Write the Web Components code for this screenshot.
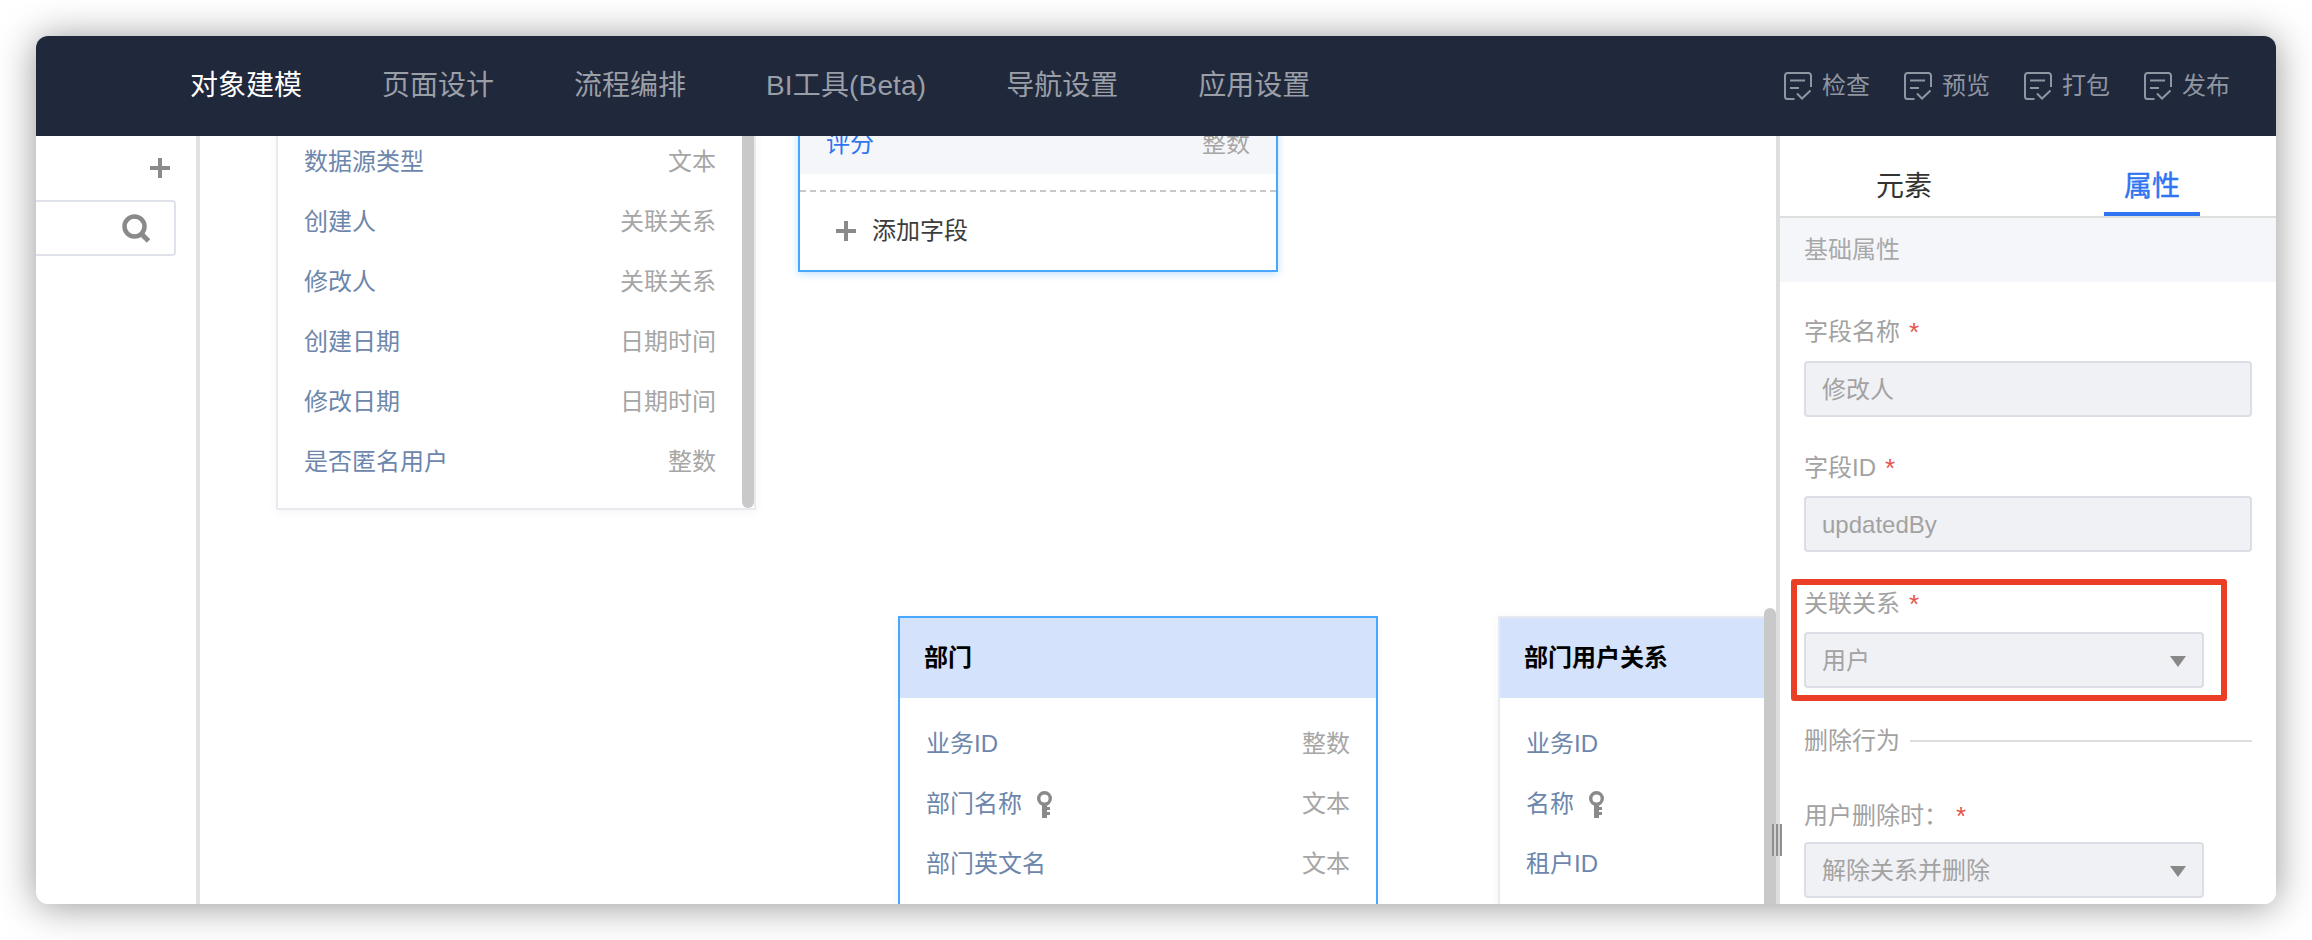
<!DOCTYPE html>
<html lang="zh-CN">
<head>
<meta charset="utf-8">
<title>对象建模</title>
<style>
  html, body { margin: 0; height: 100%; background: #fff; overflow: hidden; }
  body {
    box-sizing: border-box;
    padding: 36px;
    font: 24px/34px "Liberation Sans", "Noto Sans CJK SC", sans-serif;
  }
</style>
</head>
<body>
<app-window>
  <top-nav slot="nav">
    <nav-item active>对象建模</nav-item>
    <nav-item>页面设计</nav-item>
    <nav-item>流程编排</nav-item>
    <nav-item style="letter-spacing:.15px">BI工具(Beta)</nav-item>
    <nav-item>导航设置</nav-item>
    <nav-item>应用设置</nav-item>
    <tool-button slot="tools">检查</tool-button>
    <tool-button slot="tools">预览</tool-button>
    <tool-button slot="tools">打包</tool-button>
    <tool-button slot="tools">发布</tool-button>
  </top-nav>

  <side-list slot="side"></side-list>

  <er-canvas slot="canvas">
    <entity-card x="76" y="-6" scroll>
      <field-row>数据源类型<span slot="type">文本</span></field-row>
      <field-row>创建人<span slot="type">关联关系</span></field-row>
      <field-row>修改人<span slot="type">关联关系</span></field-row>
      <field-row>创建日期<span slot="type">日期时间</span></field-row>
      <field-row>修改日期<span slot="type">日期时间</span></field-row>
      <field-row>是否匿名用户<span slot="type">整数</span></field-row>
    </entity-card>

    <entity-card x="598" y="-24" selected addable>
      <field-row active>评分<span slot="type">整数</span></field-row>
    </entity-card>

    <entity-card x="698" y="480" title="部门" selected>
      <field-row>业务ID<span slot="type">整数</span></field-row>
      <field-row key>部门名称<span slot="type">文本</span></field-row>
      <field-row>部门英文名<span slot="type">文本</span></field-row>
    </entity-card>

    <entity-card x="1298" y="480" title="部门用户关系">
      <field-row>业务ID</field-row>
      <field-row key>名称</field-row>
      <field-row>租户ID</field-row>
    </entity-card>
  </er-canvas>

  <prop-panel slot="panel">
    <form-field label="字段名称" value="修改人"></form-field>
    <form-field label="字段ID" value="updatedBy" nudge></form-field>
    <form-field label="关联关系" value="用户" select nudge style="margin-top:35px"></form-field>
    <line-title>删除行为</line-title>
    <form-field label="用户删除时：" value="解除关系并删除" select tight></form-field>
  </prop-panel>
</app-window>

<script>
const PLUS_ICON = `<svg width="20" height="20" viewBox="0 0 20 20"><path d="M8 0h4v8h8v4h-8v8H8v-8H0V8h8z" fill="#8a8a8a"/></svg>`;

class AppWindow extends HTMLElement {
  constructor() {
    super();
    this.attachShadow({ mode: 'open' }).innerHTML = `
      <style>
        :host {
          display: flex;
          flex-direction: column;
          height: 868px;
          border-radius: 12px;
          overflow: hidden;
          background: #fff;
          box-shadow: 0 2px 38px rgba(0, 0, 0, .42);
        }
        .body { flex: 1; min-height: 0; display: flex; }
      </style>
      <slot name="nav"></slot>
      <div class="body">
        <slot name="side"></slot>
        <slot name="canvas"></slot>
        <slot name="panel"></slot>
      </div>
    `;
  }
}

class TopNav extends HTMLElement {
  constructor() {
    super();
    this.attachShadow({ mode: 'open' }).innerHTML = `
      <style>
        :host {
          display: flex;
          align-items: center;
          height: 100px;
          padding: 0 46px 0 154px;
          background: #20283b;
          flex: none;
          position: relative;
          z-index: 2;
        }
        .items { display: flex; gap: 80px; flex: 1; }
        .tools { display: flex; gap: 34px; }
      </style>
      <div class="items"><slot></slot></div>
      <div class="tools"><slot name="tools"></slot></div>
    `;
  }
}

class NavItem extends HTMLElement {
  constructor() {
    super();
    this.attachShadow({ mode: 'open' }).innerHTML = `
      <style>
        :host { display: block; font-size: 28px; line-height: 40px; color: #9a9ea7; }
        :host([active]) { color: #fff; }
      </style>
      <slot></slot>
    `;
  }
}

class ToolButton extends HTMLElement {
  constructor() {
    super();
    this.attachShadow({ mode: 'open' }).innerHTML = `
      <style>
        :host { display: flex; align-items: center; gap: 10px; color: #8f95a1; font-size: 24px; line-height: 34px; }
        svg { display: block; }
      </style>
      <svg width="28" height="28" viewBox="0 0 28 28" fill="none" stroke="#8f95a1" stroke-width="2">
        <path d="M10.5 27H3.5A2.5 2.5 0 0 1 1 24.500V3.500A2.500 2.500 0 0 1 3.500 1H24.500A2.500 2.500 0 0 1 27 3.500V15"/>
        <path d="M6 8.500H21M6 16H15M13 21.500L18 26.500L26.500 18.500"/>
      </svg>
      <span><slot></slot></span>
    `;
  }
}

class SideList extends HTMLElement {
  constructor() {
    super();
    this.attachShadow({ mode: 'open' }).innerHTML = `
      <style>
        :host {
          display: block;
          box-sizing: content-box;
          width: 160px;
          flex: none;
          overflow: hidden;
          border-right: 4px solid #e2e2e2;
          position: relative;
          box-shadow: 2px 0 4px rgba(0, 0, 0, .06);
        }
        .add { display: flex; justify-content: flex-end; padding: 22px 26px 0 0; }
        svg { display: block; }
        .search {
          box-sizing: border-box;
          height: 56px;
          margin: 22px 20px 0 -20px;
          padding-right: 23px;
          border: 2px solid #dfe2ea;
          border-radius: 4px;
          display: flex;
          align-items: center;
          justify-content: flex-end;
        }
      </style>
      <div class="add">${PLUS_ICON}</div>
      <div class="search">
        <svg width="29" height="29" viewBox="0 0 29 29" fill="none" stroke="#8a8a8a">
          <circle cx="12.500" cy="12.500" r="10" stroke-width="4.500"/>
          <path d="M19 19.500L26.500 27" stroke-width="5"/>
        </svg>
      </div>
    `;
  }
}

class ErCanvas extends HTMLElement {
  constructor() {
    super();
    this.attachShadow({ mode: 'open' }).innerHTML = `
      <style>
        :host { display: block; flex: 1; min-width: 0; position: relative; overflow: hidden; background: #fff; }
        .scrollbar {
          position: absolute;
          right: 0;
          top: 472px;
          bottom: 0;
          width: 12px;
          border-radius: 6px 6px 0 0;
          background: #c9c9c9;
        }
      </style>
      <slot></slot>
      <div class="scrollbar"></div>
    `;
  }
}

class EntityCard extends HTMLElement {
  constructor() {
    super();
    this.attachShadow({ mode: 'open' }).innerHTML = `
      <style>
        :host {
          display: block;
          position: absolute;
          box-sizing: border-box;
          width: 480px;
          background: #fff;
          border: 2px solid #e8eaf0;
          box-shadow: 0 2px 10px rgba(40, 60, 100, .05);
        }
        :host([selected]) { border-color: #48a8ff; }
        :host([selected][addable]) { box-shadow: 0 2px 8px rgba(72, 168, 255, .35); }
        :host([scroll]) { padding-right: 12px; padding-bottom: 16px; }
        :host([title]) { min-height: 520px; }
        .head {
          display: none;
          height: 80px;
          padding: 0 24px;
          align-items: center;
          background: #d4e2fb;
          color: #000;
          font-weight: 700;
        }
        :host([title]) .head { display: flex; }
        :host([title]) .rows { padding-top: 16px; }
        .bar {
          display: none;
          position: absolute;
          top: 0;
          right: 0;
          bottom: 0;
          width: 12px;
          border-radius: 0 0 6px 6px;
          background: #c9c9c9;
        }
        :host([scroll]) .bar { display: block; }
        .add {
          display: none;
          align-items: center;
          gap: 16px;
          height: 78px;
          padding-left: 36px;
          margin-top: 16px;
          border-top: 2px dashed #c8c8c8;
          color: #3c3c3c;
        }
        :host([addable]) .add { display: flex; }
        svg { display: block; }
      </style>
      <div class="head"></div>
      <div class="rows"><slot></slot></div>
      <div class="add">${PLUS_ICON}<span>添加字段</span></div>
      <div class="bar"></div>
    `;
  }

  connectedCallback() {
    this.style.left = this.getAttribute('x') + 'px';
    this.style.top = this.getAttribute('y') + 'px';
    this.shadowRoot.querySelector('.head').textContent = this.getAttribute('title') || '';
  }
}

class FieldRow extends HTMLElement {
  constructor() {
    super();
    this.attachShadow({ mode: 'open' }).innerHTML = `
      <style>
        :host {
          display: flex;
          align-items: center;
          height: 60px;
          padding: 0 26px;
          color: #6d86ab;
        }
        :host([active]) { background: #f5f6fa; color: #2f74f0; }
        .key { display: none; margin-left: 14px; }
        :host([key]) .key { display: block; }
        .type { margin-left: auto; color: #a6a6a6; }
      </style>
      <span><slot></slot></span>
      <svg class="key" width="17" height="27" viewBox="0 0 17 27" fill="none">
        <circle cx="8.500" cy="7.500" r="5.800" stroke="#8a8a8a" stroke-width="3.400"/>
        <path d="M6 13h5v3h3v3h-3v2h3v3h-3v3H6z" fill="#8a8a8a"/>
      </svg>
      <span class="type"><slot name="type"></slot></span>
    `;
  }
}

class PropPanel extends HTMLElement {
  constructor() {
    super();
    this.attachShadow({ mode: 'open' }).innerHTML = `
      <style>
        :host {
          display: block;
          flex: none;
          width: 496px;
          border-left: 4px solid #dedede;
          position: relative;
          overflow: visible;
          background: #fff;
        }
        .tabs {
          display: flex;
          height: 80px;
          border-bottom: 2px solid #dedede;
        }
        .tab {
          flex: 1;
          display: flex;
          justify-content: center;
          color: #333;
          font-size: 28px;
          height: 80px;
          overflow: hidden;
        }
        .tab span { display: block; line-height: 36px; padding: 33px 20px 0; box-sizing: border-box; height: 80px; }
        .tab.on { color: #2f74f0; }
        .tab.on span { border-bottom: 4px solid #2f74f0; -webkit-text-stroke: .4px #2f74f0; }
        .group {
          height: 64px;
          padding: 0 24px;
          display: flex;
          align-items: center;
          background: #f5f6fa;
          color: #a8a8a8;
        }
        .form { padding: 0 24px; height: 622px; overflow: hidden; }
        .grip {
          position: absolute;
          left: -8px;
          top: 688px;
          width: 10px;
          height: 32px;
          background: repeating-linear-gradient(90deg, #8f8f8f 0 2px, #d2d2d2 2px 4px);
          z-index: 2;
        }
        .mark {
          position: absolute;
          left: 11px;
          top: 443px;
          box-sizing: border-box;
          width: 436px;
          height: 122px;
          border: 6px solid #ea3f26;
          border-radius: 3px;
          pointer-events: none;
        }
      </style>
      <div class="tabs">
        <div class="tab"><span>元素</span></div>
        <div class="tab on"><span>属性</span></div>
      </div>
      <div class="group">基础属性</div>
      <div class="form"><slot></slot></div>
      <div class="grip"></div>
      <div class="mark"></div>
    `;
  }
}

class FormField extends HTMLElement {
  constructor() {
    super();
    this.attachShadow({ mode: 'open' }).innerHTML = `
      <style>
        :host { display: block; margin-top: 33px; color: #a2a2a2; }
        :host([nudge]) { margin-top: 34px; }
        :host([tight]) { margin-top: 41px; }
        .label { display: flex; height: 34px; align-items: center; }
        .star { color: #e5534b; margin-left: 9px; font-size: 26px; }
        :host([tight]) .star { margin-left: 8px; }
        .box {
          box-sizing: border-box;
          width: 448px;
          height: 56px;
          margin-top: 12px;
          padding: 2px 16px 0;
          display: flex;
          align-items: center;
          justify-content: space-between;
          background: #f0f1f5;
          border: 2px solid #dcdee6;
          border-radius: 4px;
        }
        :host([select]) .box { width: 400px; }
        :host([nudge]) .box { margin-top: 11px; }
        :host([tight]) .box { margin-top: 9px; }
        .arrow { display: none; }
        :host([select]) .arrow { display: block; }
      </style>
      <div class="label"><span class="name"></span><span class="star">*</span></div>
      <div class="box">
        <span class="value"></span>
        <svg class="arrow" width="16" height="11" viewBox="0 0 16 11"><path d="M0 0h16L8 11z" fill="#888"/></svg>
      </div>
    `;
  }

  connectedCallback() {
    this.shadowRoot.querySelector('.name').textContent = this.getAttribute('label');
    this.shadowRoot.querySelector('.value').textContent = this.getAttribute('value');
  }
}

class LineTitle extends HTMLElement {
  constructor() {
    super();
    this.attachShadow({ mode: 'open' }).innerHTML = `
      <style>
        :host { display: flex; align-items: center; gap: 10px; margin-top: 36px; height: 34px; color: #a2a2a2; }
        i { flex: 1; height: 2px; background: #dedede; }
      </style>
      <span><slot></slot></span><i></i>
    `;
  }
}

customElements.define('app-window', AppWindow);
customElements.define('top-nav', TopNav);
customElements.define('nav-item', NavItem);
customElements.define('tool-button', ToolButton);
customElements.define('side-list', SideList);
customElements.define('er-canvas', ErCanvas);
customElements.define('entity-card', EntityCard);
customElements.define('field-row', FieldRow);
customElements.define('prop-panel', PropPanel);
customElements.define('form-field', FormField);
customElements.define('line-title', LineTitle);
</script>
</body>
</html>
